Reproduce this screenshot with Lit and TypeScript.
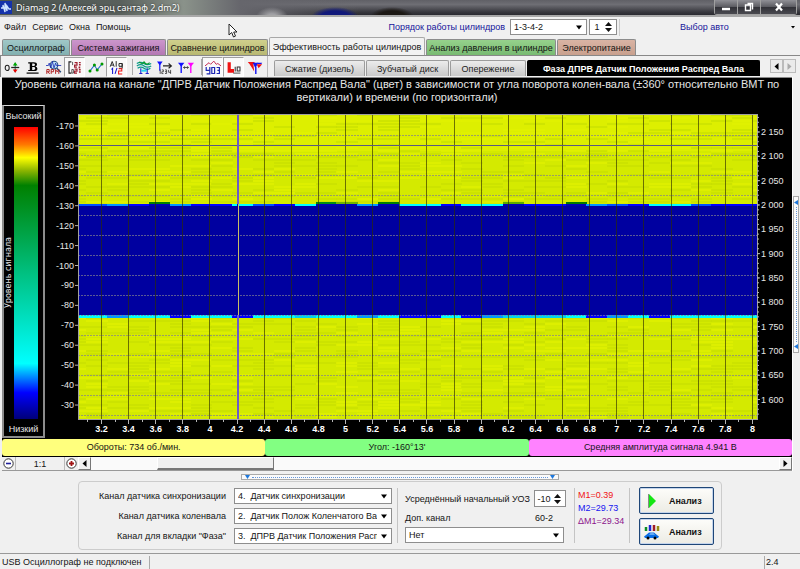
import { LitElement, html, svg, css } from "lit";
import { customElement } from "lit/decorators.js";
import { classMap } from "lit/directives/class-map.js";

const TOP_TABS = [
  { label: "Осциллограф", tone: "teal" },
  { label: "Система зажигания", tone: "violet" },
  { label: "Сравнение цилиндров", tone: "olive" },
  { label: "Эффективность работы цилиндров", tone: "current" },
  { label: "Анализ давления в цилиндре", tone: "green" },
  { label: "Электропитание", tone: "rose" },
];

const SUB_TABS = ["Сжатие (дизель)", "Зубчатый диск", "Опережение", "Фаза ДПРВ Датчик Положения Распред Вала"];

const X_MIN = 3.027;
const X_SPAN = 5.007;
const xPos = (v: number) => `${(((v - X_MIN) / X_SPAN) * 100).toFixed(3)}%`;
const yPos = (v: number) => `${(((v + 176) / 153) * 100).toFixed(3)}%`;
const rPos = (v: number) => `${(((2187 - v) / 627) * 100).toFixed(3)}%`;

const range = (from: number, to: number, step: number) => {
  const out: number[] = [];
  for (let i = 0; from + i * step <= to + step / 100; i++) out.push(from + i * step);
  return out;
};

/* Signal colour at the two edges of the low band, one entry per revolution. */
const B = "#0000ff", D = "#0000b4", C = "#00ffff", T = "#00d2f0", L = "#0096ff", M = "#0050ff";
const UPPER = [M, M, L, B, D, L, B, B, C, M, B, C, D, D, L, D, C, C, B, C, C, D, B, B, D, L, M, B, C, C, M, B, B, B];
const LOWER = [C, C, L, C, C, B, C, C, B, C, C, T, C, C, L, C, B, B, C, B, L, T, T, T, C, B, L, C, B, C, C, C, C, C];
const RISES: Array<[number, string]> = [[4, "#008000"], [12, "#008c14"], [13, "#6eb400"], [15, "#008000"], [21, "#5aaa00"], [24, "#007800"]];
const SEG = 3.068;
const segStart = (i: number) => Math.max(0, 1.25 + (i - 1) * SEG);
const segWidth = (i: number) => (i === 0 ? 1.25 : SEG + 0.05);

const noise = (a: number, b: number) => {
  const n = Math.sin(a * 12.9898 + b * 78.233) * 43758.5453;
  return n - Math.floor(n);
};

const caret = html`<svg class="caret" viewBox="0 0 8 5" aria-hidden="true"><path d="M1 0.5h6L4 4.5z" fill="#000" /></svg>`;

const icons = [
  svg`<path d="M9 9h10" stroke="#222" stroke-width="1.600"/><path d="M14 3v5M14 10v5" stroke="#064" stroke-width="1.500"/><path d="M11 6.500l3-4 3 4z" fill="#0a0"/><path d="M11 11.500l3 4 3-4z" fill="#e00"/><ellipse cx="4" cy="9.500" rx="2.500" ry="3.300" fill="none" stroke="#222" stroke-width="1.300"/>`,
  svg`<path d="M4 2.500h7q4 0 4 2.700 0 2-2 2.500 2.500.500 2.500 2.800 0 3-4 3H4v-1.500h2V4H4zM9 4v3h1.500q2 0 2-1.500T10.500 4zM9 8.500V12h1.500q2.300 0 2.300-1.800T10.500 8.500z" fill="#000" fill-rule="evenodd"/><path d="M2 16h15" stroke="#000" stroke-width="1.500"/>`,
  svg`<circle cx="10" cy="6" r="4.800" fill="#bfe3f5" stroke="#234a80" stroke-width="1.300"/><path d="M0 6.500h3l1-3 2 6 2-8 2 8 2-6 1 3h6" fill="none" stroke="#1428b4"/><path d="M13.500 10l5 5" stroke="#234a80" stroke-width="2"/><path d="M1 17v-5.500h3v2.800H1m1.500 0L4.500 17M6.500 17v-5.500h3v2.800h-3M12 17v-5.500l2 3 2-3V17" fill="none" stroke="#b02020" stroke-width="1.200"/>`,
  svg`<path d="M5.500 2H2.500v14h3" fill="none" stroke="#222" stroke-width="1.400"/><path d="M7 2v4M6 11.500h2V16H6z" fill="none" stroke="#333"/><path d="M9.500 3h3v3h-3v2.500h3M9.500 11h3v2.500h-3V16h3" fill="none" stroke="#a02030" stroke-width="1.500"/><path d="M16 2v4.500M14.500 9h3M16 11v5" stroke="#a02030" stroke-width="2.200" stroke-dasharray="1.800 .900"/>`,
  svg`<path d="M2 14L8 6l3.500 6L18 4" fill="none" stroke="#26c" stroke-width="1.300"/><g fill="#090"><circle cx="2.500" cy="13.500" r="1.900"/><circle cx="8" cy="6" r="1.900"/><circle cx="11.500" cy="12" r="1.900"/><circle cx="17.500" cy="4.500" r="1.900"/></g>`,
  svg`<path d="M1.500 8l2.500-6.500L6.500 8M2.500 6h3M9 1v7M16.500 4h-4v3.500h4zm0 0V10h-4" fill="none" stroke="#222" stroke-width="1.200"/><path d="M3 11.500l1.500-1.500v7M10 9.500L7.500 17" fill="none" stroke="#1414d2" stroke-width="1.300"/><path d="M12 10.500h4v3h-4V17h4.500" fill="none" stroke="#f01414" stroke-width="1.300"/>`,
  svg`<path d="M1 4q5-3 9 0t9 0M1 7q5-3 9 0t9 0M2 10q4-3 8 0t8 0" fill="none" stroke="#0a9a8a" stroke-width="1.500"/><path d="M4 2q4 4 6 0 3 5 7 1" fill="none" stroke="#0a9a2a" stroke-width="1.400"/><path d="M6 10v6M14 10v6M4 16.500h4M12 16.500h4" stroke="#22c" stroke-width="1.400"/><path d="M6.500 13h7" stroke="#2ad2f0" stroke-width="2.500"/>`,
  svg`<path d="M0 1.500h7L3.500 6.500z" fill="#11f"/><path d="M3.500 4v9" stroke="#11f" stroke-width="1.500"/><path d="M7.500 7h10M14.500 4l3.500 3-3.500 3" fill="none" stroke="#222" stroke-width="1.400"/><path d="M4 11.500V17M6 12h2v2.300H6v2.300h2M10 12h2v4.500h-2m0-2.300h2M14.500 12v3h3M17 12v5" fill="none" stroke="#333"/>`,
  svg`<path d="M0 3h8L4 8z" fill="#11f"/><path d="M4 5v11" stroke="#11f" stroke-width="1.700"/><path d="M12 3h8l-4 5z" fill="#f0f"/><path d="M16 5v11" stroke="#f0f" stroke-width="1.700"/><path d="M7 9h6M8.500 7.500L7 9l1.500 1.500M11.500 7.500L13 9l-1.500 1.500" fill="none" stroke="#222"/>`,
  svg`<path d="M0 7l5-4 2 2 4-4 3 4 2-1 4 3" fill="none" stroke="#c22850" stroke-width="1.200"/><path d="M1.500 8.500v4H6M6 8.500V17H2M8.500 9h3.500v7.500H8.500zM14.500 9H18v3.500h-2.500H18v4h-3.500" fill="none" stroke="#1e28b4" stroke-width="1.500"/>`,
  svg`<path d="M2 2.500h4V11h4v4.500H2z" fill="#f01414"/><path d="M9 16h9" stroke="#222"/><path d="M11.500 8v6M14 8.500h3.500v5H14z" fill="none" stroke="#333" stroke-width="1.300"/>`,
  svg`<path d="M1 2h9L5.500 7.500z" fill="#f01414"/><path d="M3.500 5h4.500l1 9z" fill="#f01414"/><path d="M7 3h7l-3.500 7z" fill="#1414f0"/><path d="M11 8v9" stroke="#1414f0" stroke-width="1.800"/><path d="M12 5h7l-4.500 5z" fill="#f01414"/><path d="M13 3h6l-1 1.500h-5z" fill="#1414f0"/>`,
];

const PRESSED = new Set([3, 5, 9, 10]);
const GROUP_START = new Set([6, 9]);

@customElement("signal-map")
class SignalMap extends LitElement {
  static styles = css`
    :host { display: flex; flex-direction: column; background: #000; color: #e6e6e6; font-family: "Liberation Sans", Arial, sans-serif; min-height: 300px; }
    .title { margin: 0; height: 27px; box-sizing: border-box; text-align: center; font: 400 11px/13px "Liberation Sans", Arial, sans-serif; }
    .body { flex: 1; display: grid; grid-template-columns: 43px 33px 1fr 35px; min-height: 0; }
    .legend { border: 2px solid #8c8c8c; border-top: 1px solid #d8d8d8; box-sizing: border-box; display: grid; grid-template: 21px 1fr 17px / 10px 1fr; font-size: 9px; line-height: 21px; }
    .cap { grid-column: 1 / 3; text-align: center; white-space: nowrap; }
    .side { writing-mode: vertical-rl; transform: rotate(180deg); text-align: center; font: 400 8px/10px "DejaVu Sans", Verdana, sans-serif; }
    .ramp { width: 24px; background: linear-gradient(#ff0000, #ff7800 6%, #ffff00 10.500%, #8ab400 15%, #008000 20%, #00c080 50%, #00ffff 81%, #0000ff 91%, #000078); }
    .axis { display: block; width: 100%; height: 100%; overflow: visible; font-size: 9px; fill: #e6e6e6; }
    .field { shape-rendering: crispEdges; }
    .left, .plot, .right { padding: 9px 0 0; display: grid; min-height: 0; min-width: 0; grid-template-rows: 1fr 19px; }
    .bold { font-weight: 700; font-size: 9px; fill: #fff; }
    .tick { stroke: #b4b4b4; stroke-width: 1; }
  `;

  private texture() {
    const out = [];
    for (let i = 0; i < 34; i++) {
      for (let r = 0; r < 102; r++) {
        const y = r * 1.5 / 1.53;
        if (y > 28.5 && y < 66) continue;
        const n = noise(i + 1, r + 1);
        if (n > 0.55) continue;
        out.push(svg`<rect x="${segStart(i)}%" y="${y}%" width="${segWidth(i)}%" height="0.7%" fill=${n < 0.22 ? "#e2f200" : "#c6de00"} opacity="0.6"/>`);
      }
    }
    return out;
  }

  private plot() {
    return html`<svg class="axis field" role="img" aria-label="Уровень сигнала">
      <svg width="100%" height="100%" overflow="hidden">
        <rect width="100%" height="100%" fill="#d4ea00" />
        <rect width="100%" height="12%" fill="#e6f400" opacity="0.5" />
        ${this.texture()}
        <rect y="29.600%" width="100%" height="36.600%" fill="#0000a0" />
        ${UPPER.map((c, i) => svg`<rect x="${segStart(i)}%" y="29.600%" width="${segWidth(i)}%" height="0.600%" fill=${c}/>`)}
        ${LOWER.map((c, i) => svg`<rect x="${segStart(i)}%" y="66%" width="${segWidth(i)}%" height="${c === B ? "1" : "0.8"}%" fill=${c}/>`)}
        ${RISES.map(([i, c]) => svg`<rect x="${segStart(i)}%" y="28.800%" width="${segWidth(i)}%" height="0.800%" fill=${c}/>`)}
        ${range(-165, -25, 10).map((v) => svg`<line x1="0" x2="100%" y1=${yPos(v)} y2=${yPos(v)} stroke="#808090" stroke-dasharray="2 1" opacity="0.700"/>`)}
        ${range(3.2, 8, 0.2).map((v) => svg`<line x1=${xPos(v)} x2=${xPos(v)} y1="0" y2="100%" stroke="#303000" opacity="0.650"/>`)}
        <line x1="0" x2="100%" y1=${yPos(-160)} y2=${yPos(-160)} stroke="#5a5a82" />
        <line x1=${xPos(4.21)} x2=${xPos(4.21)} y1="0" y2="100%" stroke="#6e5ac8" stroke-width="2" />
        <line x1=${xPos(4.21)} x2=${xPos(4.21)} y1="29.600%" y2="66%" stroke="#0000a0" stroke-width="2" />
        <line x1=${xPos(4.21)} x2=${xPos(4.21)} y1="29.600%" y2="66%" stroke="#c8be64" />
      </svg>
      <rect width="100%" height="100%" fill="none" stroke="#a0a0a0" />
      ${range(3.1, 8, 0.1).map((v) => svg`<g class="tick"><svg x=${xPos(v)} y="100%" overflow="visible"><path d="M0 0v3"/></svg></g>`)}
      ${range(3.2, 8, 0.2).map((v) => svg`<g class="tick"><svg x=${xPos(v)} y="100%" overflow="visible"><path d="M0 0v5"/></svg></g>
        <text class="bold" x=${xPos(v)} y="100%" dy="13" text-anchor="middle">${+v.toFixed(1)}</text>`)}
    </svg>`;
  }

  render() {
    return html`
      <h1 class="title">Уровень сигнала на канале "ДПРВ Датчик Положения Распред Вала" (цвет) в зависимости от угла поворота колен-вала (±360° относительно ВМТ по<br />вертикали) и времени (по горизонтали)</h1>
      <div class="body">
        <div class="legend">
          <span class="cap">Высокий</span>
          <span class="side">Уровень сигнала</span>
          <div class="ramp"></div>
          <span class="cap">Низкий</span>
        </div>
        <div class="left">
          <svg class="axis">
            ${range(-170, -30, 10).map((v) => svg`<text x="29" y=${yPos(v)} dy="3" text-anchor="end">${v}</text><line class="tick" x1="30" x2="33" y1=${yPos(v)} y2=${yPos(v)}/>`)}
          </svg>
        </div>
        <div class="plot">${this.plot()}</div>
        <div class="right">
          <svg class="axis">
            ${range(1570, 2180, 10).map((v) => svg`<line class="tick" x1="0" x2="2" y1=${rPos(v)} y2=${rPos(v)}/>`)}
            ${range(1600, 2150, 50).map((v) => svg`<line class="tick" x1="0" x2="3" y1=${rPos(v)} y2=${rPos(v)}/><text x="4" y=${rPos(v)} dy="3">${Math.floor(v / 1000)} ${String(v % 1000).padStart(3, "0")}</text>`)}
          </svg>
        </div>
      </div>`;
  }
}

@customElement("app-root")
class AppRoot extends LitElement {
  static styles = css`
    :host { display: flex; flex-direction: column; min-height: 100vh; box-sizing: border-box; position: relative; background: #f0f0f0; color: #141414; font: 400 9px/12px "Liberation Sans", Arial, sans-serif; overflow: hidden; }
    button, input, select { font: inherit; color: inherit; margin: 0; box-sizing: border-box; border-radius: 0; }
    button { padding: 0; border: 0; background: none; white-space: nowrap; }

    .titlebar { height: 17px; display: flex; align-items: center; color: #fff; background:
      radial-gradient(ellipse 24px 10px at 335px 17px, #10187a 60%, transparent),
      radial-gradient(ellipse 22px 10px at 392px 17px, #1c1814 60%, transparent),
      radial-gradient(ellipse 16px 10px at 272px 17px, #a0a0a4 30%, transparent),
      linear-gradient(90deg, #4a5450, #59605c 15%, #8a928a 23%, #66666c 30%, transparent 45%),
      linear-gradient(#606066, #6e6e74 30%, #38383e 80%, #2a2a30); border-bottom: 2px solid #a8a8a8; box-sizing: border-box; }
    .logo { width: 12px; height: 13px; margin: 0 4px 0 0; }
    .caption { flex: 1; font: 400 9px/14px "Noto Sans", "Segoe UI", sans-serif; margin: 0; text-shadow: 0 0 2px #222; }
    .win { display: flex; align-self: stretch; margin-right: 3px; border: 1px solid #a0a0a0; border-top: 0; height: 14px; border-radius: 0 0 3px 3px; }
    .win button { width: 23px; background: linear-gradient(#909096, #5a5a60 50%, #303036 50%, #4a4a50); border-right: 1px solid #a0a0a0; display: grid; place-items: center; }
    .win button:last-child { width: 35px; border: 0; }
    .win svg { width: 12px; height: 10px; }

    .menubar { height: 20px; display: flex; align-items: center; padding: 0 3px 0 4px; }
    .menubar nav { display: flex; gap: 6px; flex: 1; }
    .menubar label { color: #14149a; margin-right: 5px; }
    .auto { flex: 0 1 178px; display: flex; align-items: center; color: #14149a; border-left: 1px solid #ccc; margin-left: 2px; height: 17px; }
    .auto span { flex: 1; text-align: center; }
    .pick { display: grid; position: relative; }
    .pick select { grid-area: 1 / 1; appearance: none; background: #fff; border: 1px solid #8e8e8e; height: 16px; padding: 0 14px 0 3px; width: 100%; outline: 0; }
    .pick .caret { grid-area: 1 / 1; justify-self: end; align-self: center; margin-right: 4px; pointer-events: none; }
    .caret { width: 8px; height: 5px; }
    .order { width: 77px; margin-right: 2px; }
    .spin { display: flex; height: 16px; background: #fff; border: 1px solid #8e8e8e; box-sizing: border-box; width: 28px; align-items: center; }
    .spin input { border: 0; background: none; padding: 0; text-align: center; flex: 1; min-width: 0; width: 0; height: 14px; outline: 0; }
    .spin svg { width: 9px; height: 12px; margin-right: 3px; }
    .wide { width: 32px; height: 17px; }

    .tabs { display: flex; align-items: flex-end; height: 18px; gap: 1px; padding-left: 2px; }
    .tab { height: 16px; border: 1px solid #8c8c8c; border-bottom: 0; border-radius: 2px 2px 0 0; text-align: center; }
    .tab:nth-child(1) { width: 68px; }
    .tab:nth-child(2) { width: 95px; }
    .tab:nth-child(3) { width: 101px; }
    .tab:nth-child(4) { width: 156px; }
    .tab:nth-child(5) { width: 130px; }
    .tab:nth-child(6) { width: 79px; }
    .teal { background: linear-gradient(#a0c8c8, #82b0b0); }
    .violet { background: linear-gradient(#cc96cc, #b478b4); }
    .olive { background: linear-gradient(#d0d08c, #b8b872); }
    .green { background: linear-gradient(#96d28c, #78ba72); }
    .rose { background: linear-gradient(#dab4a4, #c8a08e); }
    .tabs .current { height: 18px; background: #f2f2f2; border-color: #a8a8a8; }

    .toolrow { display: flex; height: 22px; border-top: 1px solid #888; border-left: 1px solid #888; box-sizing: border-box; }
    .tools { display: flex; padding-top: 1px; }
    .tool { width: 21px; height: 20px; display: grid; place-items: center; border: 1px solid transparent; }
    .tool svg { width: 16px; height: 15px; overflow: visible; }
    .down { background: #fafafa; border-color: #a0a0a0 #fff #fff #a0a0a0; }
    .first { margin-left: 6px; box-shadow: -3px 0 0 -2px #aaa; }
    .subtabs { flex: 1; display: flex; align-items: flex-end; gap: 1px; border-left: 1px solid #bbb; margin-left: 2px; padding: 0 4px 1px 6px; }
    .sub { height: 16px; border: 1px solid #9c9c9c; border-bottom: 0; border-radius: 2px 2px 0 0; background: linear-gradient(#ececec, #cacaca); color: #222; }
    .sub:nth-child(1) { width: 91px; }
    .sub:nth-child(2) { width: 83px; }
    .sub:nth-child(3) { width: 76px; }
    .sub:nth-child(4) { width: 233px; }
    .subtabs .chosen { background: #000; color: #fff; border-color: #000; font-weight: 700; }
    .pager { margin-left: auto; display: flex; align-self: center; }
    .pager button { width: 13px; height: 14px; border: 1px solid #bbb; background: #ebebeb; display: grid; place-items: center; }
    .pager svg, .arrow svg { width: 5px; height: 7px; }

    .main { flex: 1; display: flex; min-height: 0; }
    .view { flex: 1; min-width: 0; display: flex; flex-direction: column; margin-left: 2px; border-top: 1px solid #888; }
    signal-map { flex: 1; }
    .rail { width: 8px; box-sizing: border-box; border-left: 1px solid #fff; background: #f0f0f0; display: flex; flex-direction: column; }
    .grip { margin: auto 0; height: 157px; width: 6px; box-sizing: border-box; border: 1px solid #aaa; background: #fafafa; display: flex; flex-direction: column; align-items: center; justify-content: space-between; padding: 3px 0; }
    .dots { flex: 1; border-left: 1px dotted #6496dc; margin: 2px 0; }
    .grip svg { width: 4px; height: 5px; }

    .readout { display: grid; grid-template-columns: repeat(3, 1fr); background: #000; height: 19px; padding: 1px 0; box-sizing: border-box; margin: 0; }
    .readout output { text-align: center; line-height: 17px; border-radius: 3px; }
    .rpm { background: #ffff7d; }
    .angle { background: #82ff82; }
    .amp { background: #ff82ff; }
    .scroller { display: flex; height: 14px; border-bottom: 1px solid #999; box-sizing: border-box; }
    .scroller button { width: 13px; display: grid; place-items: center; }
    .scroller .ratio { width: 50px; border: 1px solid #bbb; border-width: 0 1px; text-align: center; }
    .zoom svg { width: 11px; height: 11px; }
    .scroller .arrow { border: 1px solid #fff; border-right-color: #777; border-bottom-color: #777; background: #f0f0f0; }
    .track { flex: 1; background: #fafafa; display: grid; grid-template-columns: 66fr 117fr 506fr; }
    .thumb { grid-column: 2; background: #f0f0f0; border: 1px solid #fff; border-right-color: #777; border-bottom: 2px solid #777; }

    .hgrip { width: 318px; height: 6px; margin: 3px auto 0; box-sizing: border-box; border: 1px solid #aaa; background: #fafafa; display: flex; align-items: center; padding: 0 3px; gap: 2px; }
    .hdots { flex: 1; border-top: 1px dotted #6496dc; }
    .hgrip svg { width: 5px; height: 4px; }

    .panel { display: flex; margin: 1px auto 3px; border: 1px solid #ccc; border-radius: 4px; padding: 4px 7px 4px 20px; box-sizing: border-box; height: 69px; }
    .channels { display: grid; grid-template-columns: auto 158px; column-gap: 8px; row-gap: 4px; align-content: start; align-items: center; justify-items: end; margin: 2px 5px 0 0; }
    .channels .pick { width: 158px; }
    .rule { border-left: 1px solid #c4c4c4; margin: 2px 0; }
    .initial { width: 176px; padding: 0 8px 0 7px; box-sizing: border-box; display: flex; flex-direction: column; white-space: nowrap; }
    .line { display: flex; align-items: center; justify-content: flex-end; gap: 4px; margin-top: 4px; }
    .line.split { justify-content: space-between; margin-top: 5px; padding-right: 13px; }
    .initial .pick { margin-top: 3px; width: 159px; }
    .marks { width: 54px; padding: 3px 0 0 3px; box-sizing: border-box; line-height: 13px; white-space: nowrap; }
    .m1 { color: #f01414; } .m2 { color: #1414f0; } .m3 { color: #8c148c; }
    .runs { display: flex; flex-direction: column; gap: 4px; padding-left: 9px; margin-top: 1px; }
    .run { width: 75px; height: 27px; border: 1px solid #1e4678; border-radius: 2px; background: linear-gradient(#fdfdfa, #ecebe4); box-shadow: inset 0 0 0 1px #c4d4ec; display: flex; align-items: center; font-weight: 700; padding-left: 4px; gap: 9px; }
    .run svg { width: 16px; height: 16px; }
    .status { border-top: 1px solid #999; height: 16px; display: flex; line-height: 16px; box-sizing: border-box; padding-left: 2px; }
    .status span:first-child { width: 147px; }
    .status span + span { border-left: 1px solid #aaa; flex: 1; margin-top: 2px; }
    .status span:last-child { flex: 0 0 36px; padding-left: 1px; box-sizing: border-box; line-height: 13px; }
    .pointer { position: absolute; left: 228px; top: 23px; width: 10px; height: 16px; pointer-events: none; }
  `;

  private pick(id: string, text: string, cls = "") {
    return html`<div class="pick ${cls}"><select id=${id}><option>${text}</option></select>${caret}</div>`;
  }

  private spin(id: string, value: string, cls = "") {
    return html`<div class="spin ${cls}"><input id=${id} aria-label="Значение" .value=${value} />
      <svg viewBox="0 0 9 12"><path d="M1 5L4.500 1 8 5zM1 7l3.500 4L8 7z" fill="#111" /></svg></div>`;
  }

  render() {
    return html`
      <header class="titlebar">
        <svg class="logo" viewBox="0 0 12 13"><rect width="12" height="13" fill="#1432aa" /><path d="M1 7h2V4l2 7V2l2 8V5l2 3h2" fill="none" stroke="#cfe4ff" stroke-width="1.300" /></svg>
        <h1 class="caption">Diamag 2 (Алексей эрц сантаф 2.dm2)</h1>
        <div class="win">
          <button aria-label="Свернуть"><svg viewBox="0 0 12 10"><path d="M2 7h8" stroke="#fff" stroke-width="2.500" /></svg></button>
          <button aria-label="Восстановить"><svg viewBox="0 0 12 10"><path d="M4.500 1.500h5v6M2.500 3h5v5.500h-5z" fill="none" stroke="#fff" stroke-width="1.400" /></svg></button>
          <button aria-label="Закрыть"><svg viewBox="0 0 12 10"><path d="M3 1.500l6 7M9 1.500l-6 7" stroke="#fff" stroke-width="2.200" /></svg></button>
        </div>
      </header>

      <div class="menubar">
        <nav><button>Файл</button><button>Сервис</button><button>Окна</button><button>Помощь</button></nav>
        <label for="order">Порядок работы цилиндров</label>
        ${this.pick("order", "1-3-4-2", "order")}
        ${this.spin("cyl", "1")}
        <button class="auto"><span>Выбор авто</span><svg class="caret" viewBox="0 0 8 5"><path d="M2 1h4L4 3.500z" /></svg></button>
      </div>

      <div class="tabs" role="tablist">
        ${TOP_TABS.map((t) => html`<button class="tab ${t.tone}" role="tab" aria-selected=${t.tone === "current"}>${t.label}</button>`)}
      </div>

      <div class="toolrow">
        <div class="tools" role="toolbar">
          ${icons.map((icon, i) => html`<button class=${classMap({ tool: true, down: PRESSED.has(i), first: GROUP_START.has(i) })}><svg viewBox="0 0 20 18" aria-hidden="true">${icon}</svg></button>`)}
        </div>
        <div class="subtabs" role="tablist">
          ${SUB_TABS.map((t, i) => html`<button class=${classMap({ sub: true, chosen: i === 3 })} role="tab">${t}</button>`)}
          <div class="pager">
            <button aria-label="Назад"><svg viewBox="0 0 5 7"><path d="M4.500 0v7L.5 3.500z" /></svg></button>
            <button aria-label="Вперёд"><svg viewBox="0 0 5 7"><path d="M.5 0v7l4-3.500z" fill="#aaa" /></svg></button>
          </div>
        </div>
      </div>

      <main class="main">
        <section class="view">
          <signal-map></signal-map>
          <div class="readout">
            <output class="rpm">Обороты: 734 об./мин.</output>
            <output class="angle">Угол: -160°13'</output>
            <output class="amp">Средняя амплитуда сигнала 4.941 В</output>
          </div>
          <div class="scroller">
            <button class="zoom" aria-label="Уменьшить"><svg viewBox="0 0 11 11"><circle cx="5.500" cy="5.500" r="4.700" fill="#fff" stroke="#333" /><path d="M3 5.500h5" stroke="#1e1e9a" stroke-width="1.600" /></svg></button>
            <button class="ratio">1:1</button>
            <button class="zoom" aria-label="Увеличить"><svg viewBox="0 0 11 11"><circle cx="5.500" cy="5.500" r="4.700" fill="#fff" stroke="#333" /><path d="M3 5.500h5M5.500 3v5" stroke="#a01414" stroke-width="1.800" /></svg></button>
            <button class="arrow" aria-label="Влево"><svg viewBox="0 0 5 7"><path d="M4.500 0v7L.5 3.500z" /></svg></button>
            <div class="track"><div class="thumb"></div></div>
            <button class="arrow" aria-label="Вправо"><svg viewBox="0 0 5 7"><path d="M.5 0v7l4-3.500z" /></svg></button>
          </div>
        </section>
        <div class="rail"><div class="grip">
          <svg viewBox="0 0 4 5"><path d="M4 0v5L0 2.500z" fill="#1e78dc" /></svg><i class="dots"></i><svg viewBox="0 0 4 5"><path d="M4 0v5L0 2.500z" fill="#1e78dc" /></svg>
        </div></div>
      </main>

      <div class="hgrip"><svg viewBox="0 0 5 4"><path d="M0 0h5L2.500 4z" fill="#1e78dc" /></svg><i class="hdots"></i><svg viewBox="0 0 5 4"><path d="M0 0h5L2.500 4z" fill="#1e78dc" /></svg></div>

      <section class="panel">
        <div class="channels">
          <label for="sync">Канал датчика синхронизации</label>${this.pick("sync", "4.\u00a0 Датчик синхронизации")}
          <label for="crank">Канал датчика коленвала</label>${this.pick("crank", "2.\u00a0 Датчик Полож Коленчатого Вала")}
          <label for="phase">Канал для вкладки "Фаза"</label>${this.pick("phase", "3.\u00a0 ДПРВ Датчик Положения Распред Вала")}
        </div>
        <div class="rule"></div>
        <div class="initial">
          <div class="line"><label for="uoz">Усреднённый начальный УОЗ</label>${this.spin("uoz", "-10", "wide")}</div>
          <div class="line split"><label for="extra">Доп. канал</label><span>60-2</span></div>
          ${this.pick("extra", "Нет")}
        </div>
        <div class="rule"></div>
        <div class="marks"><div class="m1">M1=0.39</div><div class="m2">M2=29.73</div><div class="m3">ΔM1=29.34</div></div>
        <div class="rule"></div>
        <div class="runs">
          <button class="run"><svg viewBox="0 0 16 16"><path d="M5 1l7 7-7 7z" fill="#14e614" /><path d="M4.500 1v14" stroke="#888" /></svg>Анализ</button>
          <button class="run"><svg viewBox="0 0 16 16"><path d="M2 3v4" stroke="#0a8c28" stroke-width="2.500" /><path d="M6 1v6" stroke="#1e28d2" stroke-width="2.500" /><path d="M10 1v6" stroke="#a01e28" stroke-width="2.500" /><path d="M14 2v5" stroke="#968c14" stroke-width="2.500" /><path d="M0 12.500l2-1.500 3-2.500h5l3 2.500 2 1.500-1 1.500H1z" fill="#0a6ee6" /><path d="M5 10.500l1.500-1h3l1.500 1z" fill="#bfe6ff" /><circle cx="4" cy="14" r="1.500" /><circle cx="11" cy="14" r="1.500" /></svg>Анализ</button>
        </div>
      </section>

      <footer class="status"><span>USB Осциллограф не подключен</span><span></span><span>2.4</span></footer>
      <svg class="pointer" viewBox="0 0 10 16"><path d="M1 1v11l2.700-2.500L5.500 14l2-.900L5.700 9H9z" fill="#fff" stroke="#222" /></svg>
    `;
  }
}
